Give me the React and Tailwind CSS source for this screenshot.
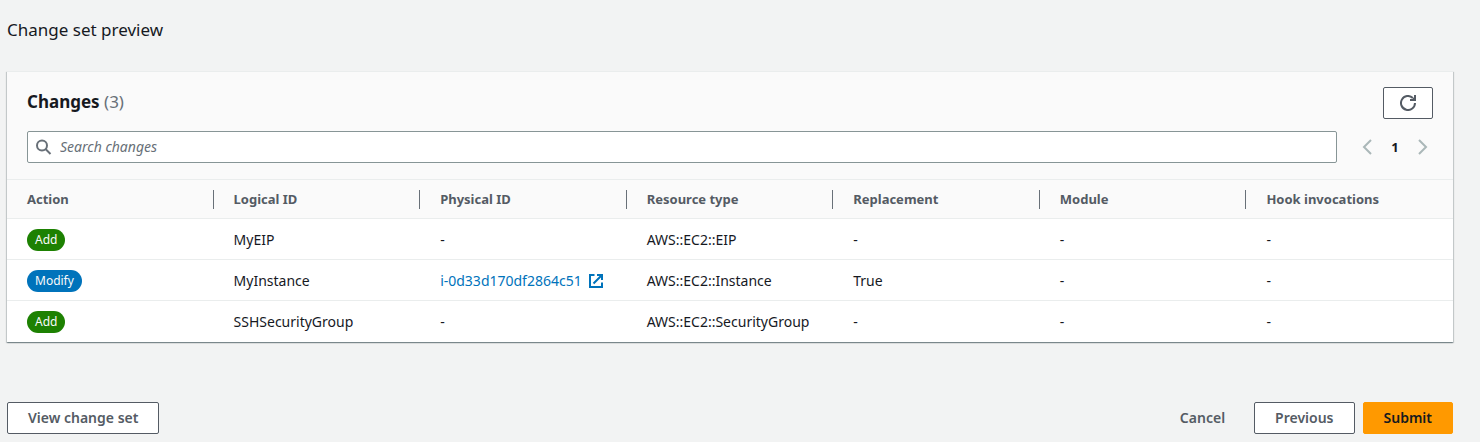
const columns = [
  'Action',
  'Logical ID',
  'Physical ID',
  'Resource type',
  'Replacement',
  'Module',
  'Hook invocations',
];

const changes = [
  { action: 'Add', logicalId: 'MyEIP', type: 'AWS::EC2::EIP', replacement: '-' },
  {
    action: 'Modify',
    logicalId: 'MyInstance',
    physicalId: 'i-0d33d170df2864c51',
    type: 'AWS::EC2::Instance',
    replacement: 'True',
  },
  { action: 'Add', logicalId: 'SSHSecurityGroup', type: 'AWS::EC2::SecurityGroup', replacement: '-' },
];

function Icon({ children }) {
  return (
    <svg
      viewBox="0 0 16 16"
      fill="none"
      stroke="currentColor"
      strokeWidth="2"
      aria-hidden="true"
      className="size-4 shrink-0"
    >
      {children}
    </svg>
  );
}

function Badge({ action }) {
  const color = action === 'Add' ? 'bg-[#1d8102]' : 'bg-[#0073bb]';
  return (
    <span className={`inline-flex h-[22px] items-center rounded-full px-2 text-[12px] text-[#fafafa] ${color}`}>
      {action}
    </span>
  );
}

function Button({ children, variant = 'normal' }) {
  const styles = {
    normal: 'border-[#545b64] bg-white text-[#545b64]',
    link: 'border-transparent text-[#545b64]',
    primary: 'border-[#ff9900] bg-[#ff9900] text-[#16191f]',
  };
  return (
    <button type="button" className={`h-8 rounded-[2px] border px-5 text-[14px] leading-5 font-semibold ${styles[variant]}`}>
      {children}
    </button>
  );
}

function Cell({ children }) {
  return <td className="pt-0.5 pl-5">{children}</td>;
}

function ChangeRow({ change }) {
  return (
    <tr className="h-[41px] border-t border-[#eaeded]">
      <Cell>
        <div className="flex">
          <Badge action={change.action} />
        </div>
      </Cell>
      <Cell>{change.logicalId}</Cell>
      <Cell>
        {change.physicalId ? (
          <a href="#instance" className="flex items-center gap-1.5 text-[#0073bb]">
            {change.physicalId}
            <Icon>
              <path d="M6.5 2H2v12h12V9.5" />
              <path d="M9 2h5v5M14 2 5.5 10.5" />
            </Icon>
          </a>
        ) : (
          '-'
        )}
      </Cell>
      <Cell>{change.type}</Cell>
      <Cell>{change.replacement}</Cell>
      <Cell>-</Cell>
      <Cell>-</Cell>
    </tr>
  );
}

export default function App() {
  return (
    <main className="min-h-screen bg-[#f2f3f3] pt-[18px] pr-[27px] pb-2 pl-[7px] font-['Noto_Sans',sans-serif] text-[14px] leading-5 text-[#16191f]">
      <h1 className="text-[17px] leading-6">Change set preview</h1>

      <section className="mt-[29px] border-t border-[#eaeded] bg-white shadow-[0_1px_1px_0_rgba(0,28,36,0.3),1px_1px_1px_0_rgba(0,28,36,0.15),-1px_1px_1px_0_rgba(0,28,36,0.15)]">
        <div className="bg-[#fafafa] px-5 pt-[15px] pb-4">
          <div className="flex items-start justify-between">
            <h2 className="pt-[3px] text-[17px] leading-6 font-bold">
              Changes <span className="font-normal text-[#687078]">(3)</span>
            </h2>
            <button
              type="button"
              aria-label="Refresh"
              className="flex h-8 w-[50px] items-center justify-center rounded-[2px] border border-[#545b64] bg-white text-[#545b64]"
            >
              <Icon>
                <path d="M15 8a7 7 0 1 1-2.2-5.1" />
                <path d="M10 6V4h2.2L14 2.2V0h2v6z" fill="currentColor" stroke="none" />
              </Icon>
            </button>
          </div>

          <div className="mt-3 flex items-center gap-[22px]">
            <label className="flex h-8 flex-1 items-center gap-2 rounded-[2px] border border-[#879596] bg-white px-2 text-[#687078]">
              <Icon>
                <circle cx="6" cy="6.5" r="5" />
                <path d="m9.5 10 5 5" />
              </Icon>
              <input
                type="search"
                aria-label="Search changes"
                placeholder="Search changes"
                className="min-w-0 flex-1 bg-transparent outline-none placeholder:text-[#687078] placeholder:italic"
              />
            </label>
            <nav aria-label="Pagination" className="flex items-center pr-0.5">
              <button type="button" aria-label="Previous page" className="text-[#aab7b8]">
                <Icon>
                  <path d="M12 1 5 8l7 7" />
                </Icon>
              </button>
              <button type="button" className="w-10 text-center text-[13px] font-bold">
                1
              </button>
              <button type="button" aria-label="Next page" className="text-[#aab7b8]">
                <Icon>
                  <path d="m4 1 7 7-7 7" />
                </Icon>
              </button>
            </nav>
          </div>
        </div>

        <table className="w-full table-fixed border-collapse text-left">
          <thead>
            <tr className="h-[39px] border-t border-[#eaeded] bg-[#fafafa] text-[13px] text-[#545b64]">
              {columns.map((name, index) => (
                <th key={name} scope="col" className="p-0 font-bold">
                  <div
                    className={`flex h-[19px] items-center border-[#687078] pl-5 ${index < columns.length - 1 ? 'border-r' : ''}`}
                  >
                    {name}
                  </div>
                </th>
              ))}
            </tr>
          </thead>
          <tbody>
            {changes.map((change) => (
              <ChangeRow key={change.logicalId} change={change} />
            ))}
          </tbody>
        </table>
      </section>

      <footer className="mt-[60px] flex justify-between">
        <Button>View change set</Button>
        <div className="flex gap-2">
          <Button variant="link">Cancel</Button>
          <Button>Previous</Button>
          <Button variant="primary">Submit</Button>
        </div>
      </footer>
    </main>
  );
}
